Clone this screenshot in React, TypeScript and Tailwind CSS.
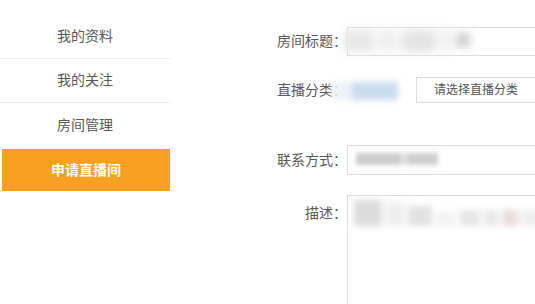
import React from 'react';

const menu = ['我的资料', '我的关注', '房间管理'];

export default function App() {
  return (
    <div
      className="flex w-[535px] h-[304px] overflow-hidden bg-white text-[#595959]"
      style={{ fontFamily: '"Liberation Sans", "Noto Sans CJK SC", sans-serif' }}
    >
      {/* Sidebar */}
      <div className="w-[170px] shrink-0 pt-[15px]">
        {menu.map((m, i) => (
          <div
            key={m}
            className={`h-[44px] flex items-center justify-center text-[14px] ${i < 2 ? 'border-b border-[#eeeeee]' : ''}`}
          >
            {m}
          </div>
        ))}
        <div className="ml-[2px] mt-[2px] h-[42px] bg-[#f9a023] flex items-center justify-center text-[14px] font-bold text-white">
          申请直播间
        </div>
      </div>

      {/* Form */}
      <div className="flex-1 pl-[100px] pt-[27px] flex flex-col">
        <div className="flex items-center h-[29px]">
          <div className="w-[77px] shrink-0 text-right text-[14px]">房间标题：</div>
          <div className="relative h-[29px] w-[300px] border border-[#dcdcdc] bg-white">
            <div className="absolute left-[-4px] top-[2px] w-[130px] h-[22px] flex gap-[4px] blur-[4px]">
              <div className="w-[30px] h-full bg-[#e8e8e8]" />
              <div className="w-[20px] h-full bg-[#efefef]" />
              <div className="w-[34px] h-full bg-[#e4e4e4]" />
              <div className="w-[12px] h-full bg-[#f0f0f0]" />
              <div className="w-[14px] h-[14px] mt-[3px] bg-[#cdcdcd]" />
            </div>
          </div>
        </div>

        <div className="flex items-center h-[26px] mt-[21px]">
          <div className="w-[77px] shrink-0 text-right text-[14px] relative">
            直播分类：
            <div className="absolute left-[62px] top-[2px] w-[66px] h-[18px] flex blur-[3px]">
              <div className="w-[20px] h-full bg-[#eef2f6]" />
              <div className="w-[46px] h-full bg-[#c9dcee]" />
            </div>
          </div>
          <div className="ml-[-8px] pl-[77px]">
            <div className="h-[26px] w-[140px] border border-[#dcdcdc] flex items-center pl-[17px] text-[12px] text-[#555]">
              请选择直播分类
            </div>
          </div>
        </div>

        <div className="flex items-center h-[30px] mt-[42px]">
          <div className="w-[77px] shrink-0 text-right text-[14px]">联系方式：</div>
          <div className="relative h-[30px] w-[300px] border border-[#dcdcdc] bg-white">
            <div className="absolute left-[8px] top-[7px] h-[12px] w-[82px] flex blur-[2px]">
              <div className="w-[44px] h-full bg-[#cdcdcd]" />
              <div className="w-[8px] h-full bg-[#dedede]" />
              <div className="w-[30px] h-full bg-[#cfcfcf]" />
            </div>
          </div>
        </div>

        <div className="flex items-start mt-[20px]">
          <div className="w-[77px] shrink-0 text-right text-[14px] pt-[8px]">描述：</div>
          <div className="relative h-[120px] w-[300px] border border-[#dcdcdc] bg-white">
            <div className="absolute left-[6px] top-[2px] h-[28px] w-[200px] flex gap-[4px] items-end blur-[3px]">
              <div className="w-[28px] h-[26px] bg-[#dcdcdc]" />
              <div className="w-[18px] h-[24px] bg-[#eeeeee]" />
              <div className="w-[24px] h-[20px] bg-[#e2e2e2]" />
              <div className="w-[20px] h-[14px] bg-[#f2f2f2]" />
              <div className="w-[20px] h-[16px] bg-[#e6e6e6]" />
              <div className="w-[14px] h-[16px] bg-[#e8e8e8]" />
              <div className="w-[16px] h-[16px] bg-[#e9dcdc]" />
              <div className="w-[20px] h-[16px] bg-[#eeeeee]" />
            </div>
          </div>
        </div>
      </div>
    </div>
  );
}
